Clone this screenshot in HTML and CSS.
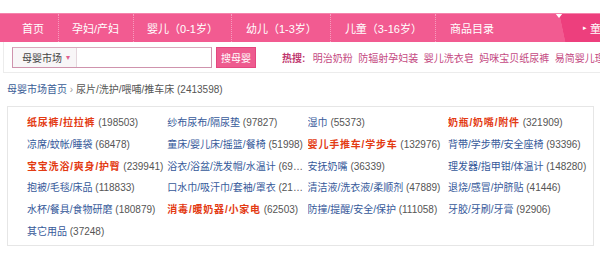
FILE: index.html
```html
<!DOCTYPE html>
<html lang="zh-CN">
<head>
  <meta charset="UTF-8" />
  <meta name="viewport" content="width=device-width, initial-scale=1.0" />
  <title>母婴市场 - 尿片/洗护/喂哺/推车床</title>
  <link rel="stylesheet" href="styles.css">
</head>
<body>
  <nav class="topnav">
    <a class="nav-item" href="#">首页</a>
    <a class="nav-item" href="#">孕妇/产妇</a>
    <a class="nav-item" href="#">婴儿（0-1岁）</a>
    <a class="nav-item" href="#">幼儿（1-3岁）</a>
    <a class="nav-item" href="#">儿童（3-16岁）</a>
    <a class="nav-item" href="#">商品目录</a>
    <a class="nav-tab" href="#"><span class="tab-arrow">&#9656;</span>童装</a>
  </nav>

  <div class="search-bar">
    <form class="search-box">
      <span class="search-scope">母婴市场<span class="scope-arrow">&#9662;</span></span>
      <input class="search-input" type="text" />
    </form>
    <button class="search-btn">搜母婴</button>
    <div class="hot">
      <strong class="hot-label">热搜:</strong>
      <a href="#">明治奶粉</a>
      <a href="#">防辐射孕妇装</a>
      <a href="#">婴儿洗衣皂</a>
      <a href="#">妈咪宝贝纸尿裤</a>
      <a href="#">易简婴儿理发器</a>
    </div>
  </div>

  <p class="crumb"><a href="#">母婴市场首页</a> <span class="crumb-sep">&rsaquo;</span> 尿片/洗护/喂哺/推车床 (2413598)</p>

  <div class="cat-box">
    <div class="cat"><a class="red" href="#">纸尿裤/拉拉裤</a> <span class="num">(198503)</span></div>
    <div class="cat"><a href="#">纱布尿布/隔尿垫</a> <span class="num">(97827)</span></div>
    <div class="cat"><a href="#">湿巾</a> <span class="num">(55373)</span></div>
    <div class="cat"><a class="red" href="#">奶瓶/奶嘴/附件</a> <span class="num">(321909)</span></div>

    <div class="cat"><a href="#">凉席/蚊帐/睡袋</a> <span class="num">(68478)</span></div>
    <div class="cat"><a href="#">童床/婴儿床/摇篮/餐椅</a> <span class="num">(51998)</span></div>
    <div class="cat"><a class="red" href="#">婴儿手推车/学步车</a> <span class="num">(132976)</span></div>
    <div class="cat"><a href="#">背带/学步带/安全座椅</a> <span class="num">(93396)</span></div>

    <div class="cat"><a class="red" href="#">宝宝洗浴/爽身/护臀</a> <span class="num">(239941)</span></div>
    <div class="cat"><a href="#">浴衣/浴盆/洗发帽/水温计</a> <span class="num">(69251)</span></div>
    <div class="cat"><a href="#">安抚奶嘴</a> <span class="num">(36339)</span></div>
    <div class="cat"><a href="#">理发器/指甲钳/体温计</a> <span class="num">(148280)</span></div>

    <div class="cat"><a href="#">抱被/毛毯/床品</a> <span class="num">(118833)</span></div>
    <div class="cat"><a href="#">口水巾/吸汗巾/套袖/罩衣</a> <span class="num">(219457)</span></div>
    <div class="cat"><a href="#">清洁液/洗衣液/柔顺剂</a> <span class="num">(47889)</span></div>
    <div class="cat"><a href="#">退烧/感冒/护脐贴</a> <span class="num">(41446)</span></div>

    <div class="cat"><a href="#">水杯/餐具/食物研磨</a> <span class="num">(180879)</span></div>
    <div class="cat"><a class="red" href="#">消毒/暖奶器/小家电</a> <span class="num">(62503)</span></div>
    <div class="cat"><a href="#">防撞/提醒/安全/保护</a> <span class="num">(111058)</span></div>
    <div class="cat"><a href="#">牙胶/牙刷/牙膏</a> <span class="num">(92906)</span></div>

    <div class="cat"><a href="#">其它用品</a> <span class="num">(37248)</span></div>
  </div>
</body>
</html>
```

FILE: styles.css
```css
body {
  margin: 0;
  background-color: white;
  color: #555;
  font-family: 'Liberation Sans', 'Noto Sans CJK SC', sans-serif;
  font-size: 10px;
}
a {
  text-decoration: none;
}

/* top pink navigation */
.topnav {
  display: flex;
  align-items: stretch;
  height: 28px;
  margin-top: 13px;
  padding-left: 8.5px;
  background-color: #f25b91;
  border-top: 1px solid #f584ac;
  overflow: hidden;
}
.nav-item {
  display: flex;
  align-items: center;
  flex-shrink: 0;
  padding: 0 13.5px;
  color: white;
  font-size: 11px;
}
.nav-item + .nav-item {
  border-left: 1px dotted rgba(255, 255, 255, 0.4);
}
.nav-tab {
  position: relative;
  display: flex;
  align-items: center;
  gap: 3px;
  width: 43px;
  margin-left: auto;
  padding-left: 26px;
  box-sizing: border-box;
  white-space: nowrap;
  color: white;
  font-size: 11px;
  background: linear-gradient(78deg, transparent 8px, #ed3f7d 8.5px);
}
.nav-tab::before {
  content: '';
  position: absolute;
  top: -1px;
  left: -2px;
  border-left: 4px solid transparent;
  border-right: 4px solid transparent;
  border-top: 5px solid white;
}
.tab-arrow {
  font-size: 7px;
}

/* search row */
.search-bar {
  display: flex;
  align-items: center;
  height: 30px;
  margin-left: 3px;
  padding-left: 8px;
  border-left: 1px solid #ececec;
  border-bottom: 1px solid #ececec;
}
.search-box {
  display: flex;
  flex-shrink: 0;
  width: 200px;
  height: 21px;
  margin: 0;
  box-sizing: border-box;
  border: 1px solid #cf93ad;
  border-top-color: #d9a9bd;
}
.search-scope {
  display: flex;
  align-items: center;
  gap: 4px;
  width: 64px;
  padding-left: 9px;
  box-sizing: border-box;
  background-color: #f8f6f7;
  border-right: 1px solid #e4d6dc;
  color: #444;
}
.scope-arrow {
  color: #e0608f;
  font-size: 8px;
}
.search-input {
  flex: 1;
  min-width: 0;
  border: none;
  padding: 0;
  outline: none;
}
.search-btn {
  flex-shrink: 0;
  width: 40px;
  height: 21px;
  margin-left: 4px;
  padding: 0;
  border: 1px solid #e4477f;
  background-color: #ee5b8f;
  color: white;
  font-family: inherit;
  font-size: 10px;
  white-space: nowrap;
}
.hot {
  display: flex;
  gap: 5.5px;
  min-width: 0;
  margin-left: 26px;
  white-space: nowrap;
  overflow: hidden;
}
.hot-label {
  margin-right: 2px;
  color: #c0396f;
}
.hot a {
  flex-shrink: 0;
  color: #c4487f;
}

/* breadcrumb */
.crumb {
  margin: 0 0 6px 7px;
  padding-top: 7px;
  line-height: 20px;
  color: #555;
}
.crumb a {
  color: #3a5d96;
}
.crumb-sep {
  color: #999;
}

/* category grid */
.cat-box {
  display: grid;
  grid-template-columns: repeat(4, 140.3px);
  margin: 0 6px 0 7px;
  padding: 5px 0 2px 19px;
  border: 1px solid #e6e6e6;
  line-height: 21.8px;
}
.cat {
  white-space: nowrap;
  overflow: hidden;
  text-overflow: ellipsis;
}
.cat a {
  color: #36599a;
}
.cat a.red {
  color: #e33a12;
  font-weight: bold;
  letter-spacing: 0.8px;
}
.num {
  color: #555;
}
```
